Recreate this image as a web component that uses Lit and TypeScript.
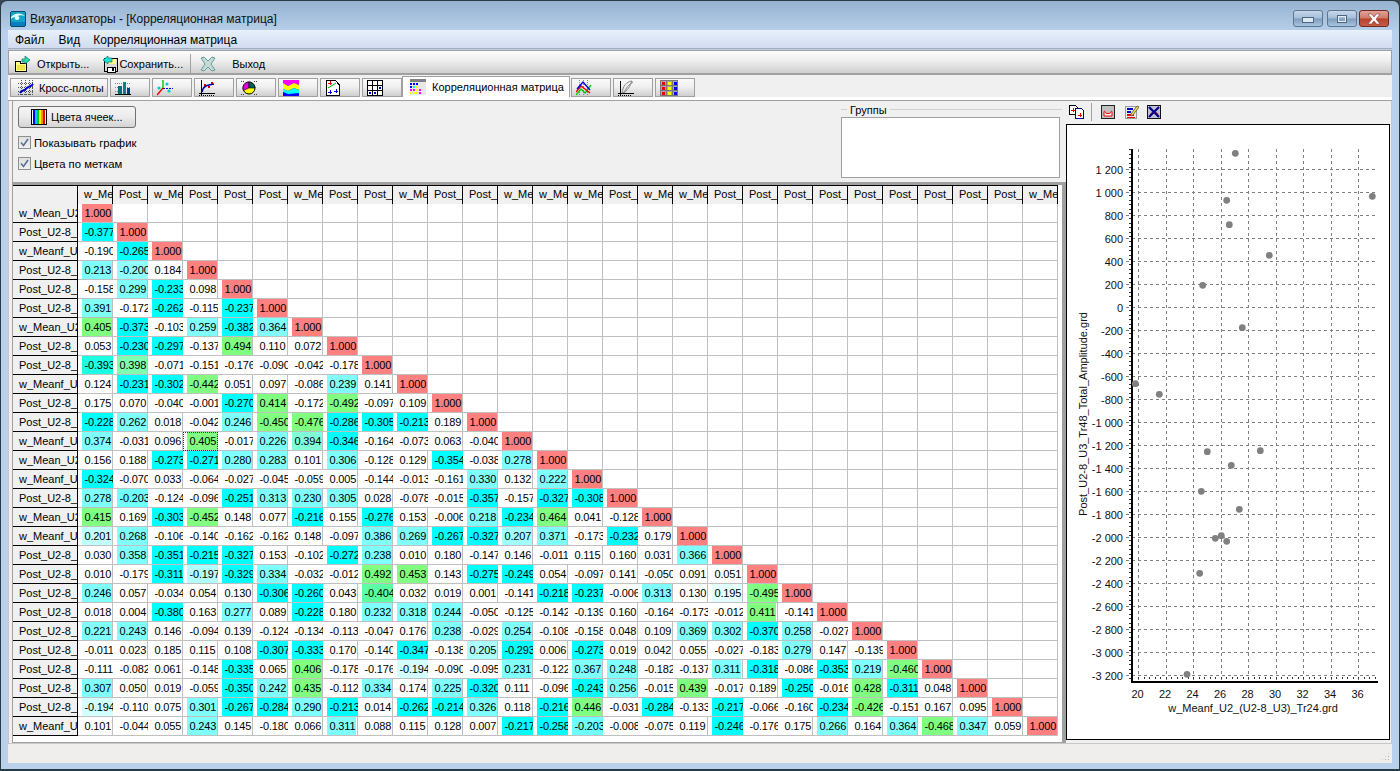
import { LitElement, html, css, svg } from "lit";
import { customElement } from "lit/decorators.js";

const DATA = `1.000
-0.377 1.000
-0.190 -0.265 1.000
0.213 -0.200 0.184 1.000
-0.158 0.299 -0.233 0.098 1.000
0.391 -0.172 -0.262 -0.115 -0.237 1.000
0.405 -0.373 -0.103 0.259 -0.382 0.364 1.000
0.053 -0.230 -0.297 -0.137 0.494 0.110 0.072 1.000
-0.393 0.398 -0.071 -0.151 -0.176 -0.090 -0.042 -0.178 1.000
0.124 -0.231 -0.302 -0.442 0.051 0.097 -0.086 0.239 0.141 1.000
0.175 0.070 -0.040 -0.001 -0.270 0.414 -0.172 -0.492 -0.097 0.109 1.000
-0.228 0.262 0.018 -0.042 0.246 -0.450 -0.476 -0.286 -0.305 -0.213 0.189 1.000
0.374 -0.031 0.096 0.405 -0.017 0.226 0.394 -0.346 -0.164 -0.073 0.063 -0.040 1.000
0.156 0.188 -0.273 -0.271 0.280 0.283 0.101 0.306 -0.128 0.129 -0.354 -0.038 0.278 1.000
-0.324 -0.070 0.033 -0.064 -0.027 -0.045 -0.059 0.005 -0.144 -0.013 -0.161 0.330 0.132 0.222 1.000
0.278 -0.203 -0.124 -0.096 -0.251 0.313 0.230 0.305 0.028 -0.078 -0.015 -0.357 -0.157 -0.327 -0.308 1.000
0.415 0.169 -0.303 -0.452 0.148 0.077 -0.216 0.155 -0.276 0.153 -0.006 0.218 -0.234 0.464 0.041 -0.128 1.000
0.201 0.268 -0.106 -0.140 -0.162 -0.162 0.148 -0.097 0.386 0.269 -0.267 -0.327 0.207 0.371 -0.173 -0.232 0.179 1.000
0.030 0.358 -0.351 -0.215 -0.327 0.153 -0.102 -0.272 0.238 0.010 0.180 -0.147 0.146 -0.011 0.115 0.160 0.031 0.366 1.000
0.010 -0.179 -0.311 -0.197 -0.329 0.334 -0.032 -0.012 0.492 0.453 0.143 -0.275 -0.249 0.054 -0.097 0.141 -0.050 0.091 0.051 1.000
0.246 0.057 -0.034 0.054 0.130 -0.306 -0.260 0.043 -0.404 0.032 0.019 0.001 -0.141 -0.218 -0.237 -0.006 0.313 0.130 0.195 -0.495 1.000
0.018 0.004 -0.380 0.163 0.277 0.089 -0.228 0.180 0.232 0.318 0.244 -0.050 -0.125 -0.142 -0.139 0.160 -0.164 -0.173 -0.012 0.411 -0.141 1.000
0.221 0.243 0.146 -0.094 0.139 -0.124 -0.134 -0.113 -0.047 0.176 0.238 -0.029 0.254 -0.108 -0.158 0.048 0.109 0.369 0.302 -0.370 0.258 -0.027 1.000
-0.011 0.023 0.185 0.115 0.108 -0.307 -0.333 0.170 -0.140 -0.347 -0.138 0.205 -0.293 0.006 -0.273 0.019 0.042 0.055 -0.027 -0.183 0.279 0.147 -0.139 1.000
-0.111 -0.082 0.061 -0.148 -0.335 0.065 0.406 -0.178 -0.176 -0.194 -0.090 -0.095 0.231 -0.122 0.367 0.248 -0.182 -0.137 0.311 -0.318 -0.086 -0.353 0.219 -0.460 1.000
0.307 0.050 0.019 -0.059 -0.350 0.242 0.435 -0.112 0.334 0.174 0.225 -0.320 0.111 -0.096 -0.243 0.256 -0.015 0.439 -0.017 0.189 -0.250 -0.016 0.428 -0.311 0.048 1.000
-0.194 -0.110 0.075 0.301 -0.267 -0.284 0.290 -0.213 0.014 -0.262 -0.214 0.326 0.118 -0.216 0.446 -0.031 -0.284 -0.133 -0.217 -0.066 -0.160 -0.234 -0.426 -0.151 0.167 0.095 1.000
0.101 -0.044 0.055 0.243 0.145 -0.180 0.066 0.311 0.088 0.115 0.128 0.007 -0.217 -0.258 -0.203 -0.008 -0.075 0.119 -0.246 -0.176 0.175 0.266 0.164 0.364 -0.468 0.347 0.059 1.000`
  .split("\n").map((l) => l.trim().split(" "));

const ROWS = ["w_Mean_U2","Post_U2-8_U","w_Meanf_U","Post_U2-8_U","Post_U2-8_U","Post_U2-8_U","w_Mean_U2","Post_U2-8_U","Post_U2-8_U","w_Meanf_U","Post_U2-8_U","Post_U2-8_U","w_Meanf_U","w_Mean_U2","w_Meanf_U","Post_U2-8_U","w_Mean_U2","w_Meanf_U","Post_U2-8_U","Post_U2-8_U","Post_U2-8_U","Post_U2-8_U","Post_U2-8_U","Post_U2-8_U","Post_U2-8_U","Post_U2-8_U","Post_U2-8_U","w_Meanf_U"];
const COLS = ROWS.map((r) => (r.startsWith("Post") ? "Post_" : "w_Me"));

const clamp = (x: number) => Math.max(0, Math.min(1, x));
const mix = (a: number[], b: number[], t: number) =>
  `rgb(${a.map((c, i) => Math.round(c + (b[i] - c) * t)).join(",")})`;
function cellColor(s: string): string {
  const v = parseFloat(s);
  if (v === 1) return "#ff8080";
  const a = Math.abs(v);
  const base = v > 0 ? [128, 255, 255] : [0, 255, 255];
  const green = [128, 255, 128];
  if (a < 0.19) return "#fff";
  if (a < 0.213) return mix([255, 255, 255], base, clamp((a - 0.19) / 0.023));
  const t = v > 0 ? clamp((a - 0.39) / 0.013) : clamp((a - 0.388) / 0.022);
  return mix(base, green, t);
}

const YT: number[] = [];
for (let v = 1200; v >= -3200; v -= 200) YT.push(v);
const XT = [20, 22, 24, 26, 28, 30, 32, 34, 36];
const yOf = (v: number) => 307.5 - v * 0.115;
const xOf = (v: number) => 1138.5 + (v - 20) * 13.75;
const fmt = (v: number) => {
  const a = Math.abs(v);
  const s = a >= 1000 ? `${Math.floor(a / 1000)} ${String(a % 1000).padStart(3, "0")}` : String(a);
  return (v < 0 ? "-" : "") + s;
};
const PTS = [[1235.3,153.3],[1226.7,200.3],[1372.3,196.3],[1229.3,224.7],[1269.3,255.3],[1202.7,285.3],[1242.3,327.7],[1135.3,383.7],[1159.3,394.3],[1207.3,451.7],[1260.3,450.7],[1231.3,465.3],[1201.3,491.3],[1239.3,509.3],[1215.3,538.3],[1221.3,535.7],[1226.7,541.3],[1199.7,573.3],[1187,674.3]];

const ic = (w: number, h: number, body: unknown) =>
  html`<svg class="ic" width=${w} height=${h} viewBox="0 0 ${w} ${h}" shape-rendering="crispEdges">${body}</svg>`;

const ICONS: Record<string, unknown> = {
  app: ic(16, 16, svg`<rect x=".5" y=".5" width="15" height="15" rx="2" fill="#12a4c4" stroke="#0a4a6a"/><path shape-rendering="auto" d="M1 6C5 1 12 2 15 5C12 4 9 4 8 5C10 6 10 9 7 9C5 9 4 7 5 6C3 6 2 7 1 8Z" fill="#dff"/><path d="M1 11H15V15H1Z" fill="#0a7fc0"/>`),
  open: ic(17, 18, svg`<path d="M1.5 6.5H6.5V8.5H12.5V16.5H1.5Z" fill="#ffff80" stroke="#000"/><path d="M3 10H11V15H3Z" fill="#e8d840" opacity=".8"/><path d="M8 7V4H11V1L16 5L11 9V7Z" fill="#20e0a0" stroke="#006060" stroke-width=".6" shape-rendering="auto"/>`),
  save: ic(17, 18, svg`<rect x="2.5" y="3.5" width="13" height="13" fill="#d8d8d8" stroke="#000"/><rect x="6" y="4" width="8" height="5" fill="#ffff80"/><rect x="5" y="12" width="8" height="5" fill="#fff" stroke="#000"/><rect x="10" y="13" width="2" height="3" fill="#000"/><path d="M1 5L6 1V3H10V7H6V9Z" fill="#20e0d0" stroke="#006060" stroke-width=".6" shape-rendering="auto"/>`),
  exit: ic(16, 16, svg`<path shape-rendering="auto" d="M1 2L4 1L8 5L12 1L15 2L11 8L15 14L12 15L8 11L4 15L1 14L5 8Z" fill="#c6d8d8" stroke="#5f9ea0"/>`),
  cross: ic(16, 16, svg`<path d="M0 3H16M0 7H16M0 11H16M0 14H16M3 0V16M7 0V16M11 0V16M14 0V16" stroke="#555" stroke-dasharray="1 1"/><path shape-rendering="auto" d="M2 13C4 9 6 12 9 8C11 6 13 7 15 4" fill="none" stroke="#00c" stroke-width="2"/>`),
  hist: ic(16, 16, svg`<path d="M0 3H16M0 7H16M0 11H16" stroke="#888" stroke-dasharray="1 1"/><rect x="3" y="6" width="4" height="8" fill="#006f80"/><rect x="8" y="2" width="3" height="12" fill="#008090"/><rect x="12" y="8" width="3" height="6" fill="#003f80"/><path d="M0 14.5H16" stroke="#000"/>`),
  axes: ic(16, 16, svg`<path shape-rendering="auto" d="M6 8V0" stroke="#0c0" stroke-width="1.4"/><path shape-rendering="auto" d="M6 8L0 15" stroke="#e00" stroke-width="1.4"/><path d="M6 8H16" stroke="#00c" stroke-dasharray="2 1"/><circle shape-rendering="auto" cx="10" cy="4" r="1.6" fill="#0cc"/><circle shape-rendering="auto" cx="2" cy="8" r="1.6" fill="#0cc"/><circle shape-rendering="auto" cx="12" cy="11" r="1.6" fill="#0cc"/>`),
  curve: ic(16, 16, svg`<path d="M2.5 0V15.5M0 13.5H16" stroke="#000"/><path d="M0 15.5H16" stroke="#000" stroke-dasharray="1 1"/><path shape-rendering="auto" d="M3 12C4 6 8 5 15 4" fill="none" stroke="#00a" stroke-width="1.6"/><rect x="5" y="4" width="2" height="2" fill="#c00"/><rect x="9" y="6" width="2" height="2" fill="#c00"/><rect x="12" y="2" width="2" height="2" fill="#c00"/>`),
  pie: ic(16, 16, svg`<g shape-rendering="auto"><circle cx="8" cy="8" r="6" fill="#ff0" stroke="#000"/><path d="M8 8V2A6 6 0 0 0 2.5 10.5Z" fill="#e000e0" stroke="#000" stroke-width=".6"/><path d="M8 8V2A6 6 0 0 1 14 8Z" fill="#006060" stroke="#000" stroke-width=".6"/></g><path d="M0 1.5H3M13 1.5H16M0 14.5H3M13 14.5H16" stroke="#444" stroke-dasharray="1 1"/>`),
  map: ic(16, 16, svg`<rect width="16" height="16" fill="#00f"/><path shape-rendering="auto" d="M0 0H16V5L11 3L5 6L0 3Z" fill="#f0f"/><path shape-rendering="auto" d="M0 3L5 6L11 3L16 5V10L11 8L5 11L0 9Z" fill="#ff0"/><path shape-rendering="auto" d="M0 9L5 11L11 8L16 10V13L5 14L0 12Z" fill="#0ff"/>`),
  doc: ic(16, 16, svg`<path d="M1.5 .5H10.5L14.5 5V15.5H1.5Z" fill="#fff" stroke="#000"/><path d="M3 3H7M5 1V5" stroke="#e00"/><path shape-rendering="auto" d="M3 8L11 3" stroke="#0a0"/><path d="M3 12H7M5 10V14M9 11H13M11 9V13" stroke="#00c"/>`),
  grid: ic(16, 16, svg`<rect x=".5" y=".5" width="15" height="15" fill="#fff" stroke="#000"/><path d="M5.5 0V16M10.5 0V16M0 5.5H16M0 10.5H16" stroke="#000"/><path d="M2 13H4M7 13H9M12 8H14" stroke="#00c" stroke-width="2"/>`),
  matrix: ic(16, 16, svg`<rect width="16" height="3" fill="#808080"/><rect y="3" width="16" height="13" fill="#e8e8e8"/>${[[0,4,"#00f"],[3,4,"#00f"],[6,4,"#00f"],[0,7,"#00f"],[3,7,"#0ff"],[6,7,"#ff0"],[0,10,"#f0f"],[3,10,"#f0f"],[6,10,"#ff0"],[9,10,"#f0f"],[0,13,"#ff0"],[3,13,"#ff0"],[6,13,"#ff0"],[9,13,"#f0f"]].map(([x,y,c]) => svg`<rect x=${x} y=${y} width="2" height="2" fill=${c}/>`)}`),
  lines: ic(16, 16, svg`<path d="M3 0V16M7 0V16M11 0V16" stroke="#888" stroke-dasharray="1 1"/><g shape-rendering="auto" fill="none" stroke-width="1.4"><path d="M0 15L5 9L9 13L15 5" stroke="#0c0"/><path d="M0 12L5 6L9 9L14 13" stroke="#e00"/><path d="M1 9L7 2L14 10" stroke="#00d"/></g>`),
  hyst: ic(16, 16, svg`<path d="M2.5 1V15.5M0 13.5H16" stroke="#000"/><path d="M0 15.5H14" stroke="#000" stroke-dasharray="1 1"/><g shape-rendering="auto" fill="none" stroke="#888"><path d="M4 13C5 6 8 2 14 1C12 6 10 11 4 13Z"/><path d="M6 13C8 8 11 4 15 2"/></g>`),
  table: ic(18, 16, svg`<rect x=".5" y=".5" width="17" height="15" fill="#aaa" stroke="#777"/><path d="M6.5 0V16M12.5 0V16M0 5.5H18M0 10.5H18" stroke="#777"/>${[[2,2,"#e00"],[8,2,"#ff0"],[14,2,"#00e"],[2,7,"#e00"],[8,7,"#ff0"],[14,7,"#00e"],[2,12,"#e00"],[8,12,"#ff0"],[14,12,"#00e"]].map(([x,y,c]) => svg`<rect x=${x} y=${y} width="3" height="3" fill=${c}/>`)}`),
  rainbow: ic(16, 16, svg`<rect x=".5" y=".5" width="15" height="15" rx="1" fill="#fff" stroke="#000"/>${["#00f","#0cf","#0c0","#ff0","#f80","#e00"].map((c, i) => svg`<rect x=${2 + i * 2} y="1" width="2" height="14" fill=${c}/>`)}`),
  copy: ic(15, 14, svg`<path d="M.5 .5H6.5L8.5 2.5V9.5H.5Z" fill="#fff" stroke="#000"/><path d="M6.5 3.5H12.5L14.5 5.5V13.5H6.5Z" fill="#fff" stroke="#00008b"/><path d="M2 5H6M4 3V7M9 10H13M11 8V12" stroke="#e00"/>`),
  clear: ic(14, 14, svg`<rect x=".5" y=".5" width="13" height="13" rx="1" fill="#c0c0c0" stroke="#222"/><path shape-rendering="auto" d="M3 7C3 6 4 6 4 7C4 9 10 9 10 7C10 6 11 6 11 7V11H3Z" fill="#fff" stroke="#e00"/>`),
  edit: ic(14, 14, svg`<rect x=".5" y="1.5" width="11" height="12" fill="#eee" stroke="#999"/><rect x="2" y="3" width="6" height="2" fill="#00c"/><rect x="2" y="6" width="4" height="2" fill="#00c"/><rect x="2" y="9" width="7" height="2" fill="#e00"/><rect x="2" y="12" width="8" height="1" fill="#e00"/><path shape-rendering="auto" d="M6 9L12 1L14 2L8 10L6 11Z" fill="#ffe040" stroke="#665"/>`),
  del: ic(14, 14, svg`<rect x=".5" y=".5" width="13" height="13" rx="1" fill="#c0c0d8" stroke="#111"/><g shape-rendering="auto"><path d="M3 12C3 6 11 6 11 12" fill="none" stroke="#e00" stroke-width="1.4"/><path d="M2 2L12 12M12 2L2 12" stroke="#00008b" stroke-width="2.2"/></g>`),
};

@customElement("app-root")
export class AppRoot extends LitElement {
  static styles = css`
    :host { display: block; width: 1400px; height: 771px; background: #3a4a55; font-family: "Liberation Sans", Arial, sans-serif; font-size: 11px; color: #000; overflow: hidden; }
    .ic { display: block; flex: none; }
    .win { box-sizing: border-box; width: 1400px; height: 771px; display: flex; flex-direction: column; border: 1px solid #2a3a44; border-bottom-width: 2px; border-radius: 7px 7px 0 0; padding: 0 7px 6px 7px; background: linear-gradient(#96b2d0 0, #b9d1ea 32px); }
    .title { height: 30px; flex: none; display: flex; align-items: center; padding: 7px 3px 0 2px; margin-top: -1px; box-sizing: border-box; }
    .title .t { margin-left: 4px; font-size: 12px; color: #111; }
    .spacer { flex: 1; }
    .wbtn { width: 30px; height: 17px; box-sizing: border-box; border: 1px solid #5d7690; border-radius: 3px; margin-left: 4px; display: flex; align-items: center; justify-content: center; background: linear-gradient(#c6d8ea 0, #a4bdd8 48%, #7e9cbc 52%, #a8c4de 100%); }
    .wbtn.close { margin-left: 2px; border-color: #6e2a22; background: linear-gradient(#e0a498 0, #cf7a68 48%, #b8402e 52%, #c95a48 100%); }
    .wbtn.close svg { display: block; }
    .wmin { width: 10px; height: 4px; background: #dfe8f2; border: 1px solid #4d6680; box-sizing: content-box; margin-top: 2px; }
    .wmax { border: 2px solid #e4ecf4; outline: 1px solid #4d6680; outline-offset: -1px; box-sizing: content-box; width: 6px; height: 4px; }
    .menu { flex: none; display: flex; align-items: center; font-size: 12px; background: linear-gradient(#e8f0fb, #d2dcf0); border-bottom: 1px solid #a4acbc; padding: 2px 0 0 7px; box-sizing: border-box; height: 19px; }
    .menu span { margin-right: 14px; }
    .menu span:nth-child(2) { margin-right: 13px; }
    .tb { height: 25px; flex: none; box-sizing: border-box; margin-top: 1px; border: 1px solid #a0a0a0; border-bottom-width: 2px; background: linear-gradient(#fdfdfd, #eeeeee 45%, #cfcfcf); display: flex; align-items: center; padding: 3px 0 0 5px; font-size: 11px; }
    .tb .i1 { margin-right: 6px; }
    .tb .lab2 { margin-left: 13px; }
    .tb .sep { width: 1px; height: 19px; background: #a0a0a0; margin: 0 9px 0 7px; }
    .tb .lab4 { margin-left: 16px; }
    .tabs { height: 22px; flex: none; background: #f0f0f0; display: flex; align-items: flex-end; padding-left: 2px; gap: 2px; }
    .tab { box-sizing: border-box; height: 19px; width: 40px; border: 1px solid #a0a0a0; background: linear-gradient(#fafafa, #f0f0f0 45%, #cfcfcf); display: flex; align-items: center; padding-left: 4px; }
    .tab.first { width: 98px; padding-left: 7px; gap: 5px; }
    .tab.active { width: 168px; height: 21px; background: #fff; border-bottom: none; padding-left: 7px; gap: 6px; margin-left: -2px; margin-right: -1px; padding-bottom: 1px; }
    .strip { height: 3px; flex: none; background: #fff; border-bottom: 1px solid #a0a0a0; }
    .main { flex: 1; min-height: 0; display: flex; background: #f0f0f0; border-left: 1px solid #c8c8c8; border-right: 1px solid #c8c8c8; padding-left: 3px; }
    .left { width: 1054px; flex: none; display: flex; flex-direction: column; border-left: 1px solid #a0a0a0; box-sizing: border-box; }
    .ctl { height: 81px; flex: none; display: flex; justify-content: space-between; box-sizing: border-box; padding: 5px 5px 0 5px; }
    .ctlL { display: flex; flex-direction: column; }
    .btn { box-sizing: border-box; width: 118px; height: 22px; border: 1px solid #707070; border-radius: 3px; background: linear-gradient(#f4f4f4, #ebebeb 50%, #d4d4d4); display: flex; align-items: center; padding-left: 12px; gap: 4px; font-size: 11px; }
    .chk { display: flex; align-items: center; gap: 3px; margin-top: 8px; height: 13px; font-size: 11.3px; }
    .box { width: 13px; height: 13px; box-sizing: border-box; border: 1px solid #8e8f8f; background: linear-gradient(#e0e0e0, #f0f0f0); display: flex; align-items: center; justify-content: center; }
    .group { width: 221px; display: flex; flex-direction: column; margin-right: -1px; }
    .ghead { display: flex; align-items: center; height: 11px; margin-top: -2px; gap: 3px; }
    .ghead i { height: 1px; background: #d0d0d0; display: block; }
    .ghead i:first-child { width: 6px; }
    .ghead i:last-child { flex: 1; }
    .list { height: 61px; margin: 2px 2px 0 0; background: #fff; border: 1px solid #a0a0a0; box-sizing: border-box; }
    .gridrow { flex: 1; min-height: 0; display: flex; border-top: 3px solid #a0a0a0; }
    .gridbox { flex: 1; background: #fff; overflow: hidden; box-sizing: border-box; border-bottom: 1px solid #a0a0a0; }
    .vbar { width: 4px; flex: none; background: #a0a0a0; }
    .grid { display: grid; grid-template-columns: 65px repeat(28, 35px); grid-auto-rows: 19px; width: 1045px; }
    .hd { height: 20px; box-sizing: border-box; background: #f0f0f0; border-top: 1px solid #000; border-bottom: 1px solid #000; border-right: 1px solid #000; padding-left: 6px; line-height: 17px; white-space: nowrap; overflow: hidden; }
    .hd.corner { padding: 0; }
    .rh { box-sizing: border-box; background: #f0f0f0; border-bottom: 1px solid #000; border-right: 1px solid #000; padding-left: 6px; line-height: 18px; white-space: nowrap; overflow: hidden; }
    .c { box-shadow: inset -1px -1px 0 #c0c0c0; background: #fff; overflow: hidden; padding-left: 4px; box-sizing: border-box; white-space: nowrap; }
    .c span { display: inline-block; height: 18px; line-height: 18px; padding: 0 0.9px 0 2.6px; letter-spacing: -0.2px; vertical-align: top; }
    .c.sel { outline: 1px dotted #502050; outline-offset: -1px; }
    .right { flex: 1; display: flex; flex-direction: column; min-width: 0; box-sizing: border-box; }
    .rtb { height: 23px; flex: none; display: flex; align-items: center; padding: 0 0 2px 3px; box-sizing: border-box; }
    .rtb .sp { width: 1px; height: 18px; background: #a0a0a0; margin: 0 9px 0 7px; }
    .rtb .g1 { margin-right: 10px; }
    .rtb .g2 { margin-right: 8px; }
    .plot { flex: 1; min-height: 0; background: #fff; border: 1px solid #000; box-sizing: border-box; margin-right: 1px; margin-bottom: 3px; }
    .plot svg { display: block; }
    .plot text { font-family: "Liberation Sans", Arial, sans-serif; font-size: 11px; fill: #111; }
    .status { height: 20px; flex: none; background: #f0eded; border-top: 1px solid #c8c8c8; box-sizing: border-box; display: flex; justify-content: flex-end; align-items: flex-end; }
    .grip { width: 9px; height: 9px; margin: 0 2px 2px 0; background-image: radial-gradient(circle at 50% 50%, #b0b0b0 0 1px, transparent 1px); background-size: 3px 3px; clip-path: polygon(100% 0, 100% 100%, 0 100%); }
  `;

  private chart() {
    const minorY: number[] = [];
    for (let y = 149.5; y < 680; y += 4.6) minorY.push(y);
    const minorX: number[] = [];
    for (let x = 1138.5; x < 1378; x += 5.5) minorX.push(x);
    return html`<svg width="320" height="613" viewBox="1067 125 320 613">
      <g stroke="#808080" stroke-width="1" stroke-dasharray="3 3" shape-rendering="crispEdges" fill="none">
        ${YT.map((v) => svg`<line x1="1126" x2="1375" y1=${yOf(v)} y2=${yOf(v)}/>`)}
        ${XT.map((v) => svg`<line y1="149" y2="680" x1=${xOf(v)} x2=${xOf(v)}/>`)}
      </g>
      <g stroke="#333" stroke-width="1" shape-rendering="crispEdges">
        ${minorY.map((y) => svg`<line x1="1129" x2="1131" y1=${y} y2=${y}/>`)}
        ${minorX.map((x) => svg`<line y1="677" y2="679" x1=${x} x2=${x}/>`)}
      </g>
      <path d="M1131.5 149V681.5H1378" fill="none" stroke="#000" stroke-width="2" shape-rendering="crispEdges"/>
      ${PTS.map(([x, y]) => svg`<circle cx=${x} cy=${y} r="3.4" fill="#808080"/>`)}
      ${YT.map((v) => svg`<text x="1123" y=${yOf(v) + 4} text-anchor="end">${fmt(v)}</text>`)}
      ${XT.map((v) => svg`<text x=${xOf(v) - 1} y="698" text-anchor="middle">${v}</text>`)}
      <text x="1253" y="712" text-anchor="middle">w_Meanf_U2_(U2-8_U3)_Tr24.grd</text>
      <text transform="translate(1087 414) rotate(-90)" text-anchor="middle">Post_U2-8_U3_Tr48_Total_Amplitude.grd</text>
    </svg>`;
  }

  private grid() {
    return html`<div class="grid">
      <div class="hd corner"></div>
      ${COLS.map((c) => html`<div class="hd">${c}</div>`)}
      ${ROWS.map((r, i) => html`<div class="rh">${r}</div>
        ${COLS.map((_, j) => {
          const v = DATA[i][j];
          if (v === undefined) return html`<div class="c"></div>`;
          const bg = cellColor(v);
          const sel = i === 12 && j === 3;
          return html`<div class="c ${sel ? "sel" : ""}"><span style="background:${bg}">${v}</span></div>`;
        })}`)}
    </div>`;
  }

  render() {
    const tabsA = ["hist", "axes", "curve", "pie", "map", "doc", "grid"];
    const tabsB = ["lines", "hyst", "table"];
    const tick = html`<svg width="9" height="9" viewBox="0 0 9 9"><path d="M1 4.5L3.5 7.5L8 1" fill="none" stroke="#5a6f9a" stroke-width="1.6"/></svg>`;
    return html`<div class="win">
      <div class="title">${ICONS.app}<span class="t">Визуализаторы - [Корреляционная матрица]</span><span class="spacer"></span>
        <div class="wbtn"><div class="wmin"></div></div>
        <div class="wbtn"><div class="wmax"></div></div>
        <div class="wbtn close"><svg width="16" height="12" viewBox="0 0 16 12"><path d="M2 1H5.5L8 4L10.5 1H14L10 6L14 11H10.5L8 8L5.5 11H2L6 6Z" fill="#fff" stroke="#6e2a22" stroke-width=".5"/></svg></div>
      </div>
      <div class="menu"><span>Файл</span><span>Вид</span><span>Корреляционная матрица</span></div>
      <div class="tb"><span class="i1">${ICONS.open}</span><span>Открыть...</span><span class="lab2">${ICONS.save}</span><span>Сохранить...</span><span class="sep"></span>${ICONS.exit}<span class="lab4">Выход</span></div>
      <div class="tabs">
        <div class="tab first">${ICONS.cross}<span>Кросс-плоты</span></div>
        ${tabsA.map((t) => html`<div class="tab">${ICONS[t]}</div>`)}
        <div class="tab active">${ICONS.matrix}<span>Корреляционная матрица</span></div>
        ${tabsB.map((t) => html`<div class="tab">${ICONS[t]}</div>`)}
      </div>
      <div class="strip"></div>
      <div class="main">
        <div class="left">
          <div class="ctl">
            <div class="ctlL">
              <div class="btn">${ICONS.rainbow}<span>Цвета ячеек...</span></div>
              <div class="chk"><div class="box">${tick}</div><span>Показывать график</span></div>
              <div class="chk"><div class="box">${tick}</div><span>Цвета по меткам</span></div>
            </div>
            <div class="group">
              <div class="ghead"><i></i><span>Группы</span><i></i></div>
              <div class="list"></div>
            </div>
          </div>
          <div class="gridrow">
            <div class="gridbox">${this.grid()}</div>
            <div class="vbar"></div>
          </div>
        </div>
        <div class="right">
          <div class="rtb">${ICONS.copy}<span class="sp"></span><span class="g1">${ICONS.clear}</span><span class="g2">${ICONS.edit}</span>${ICONS.del}</div>
          <div class="plot">${this.chart()}</div>
        </div>
      </div>
      <div class="status"><div class="grip"></div></div>
    </div>`;
  }
}
